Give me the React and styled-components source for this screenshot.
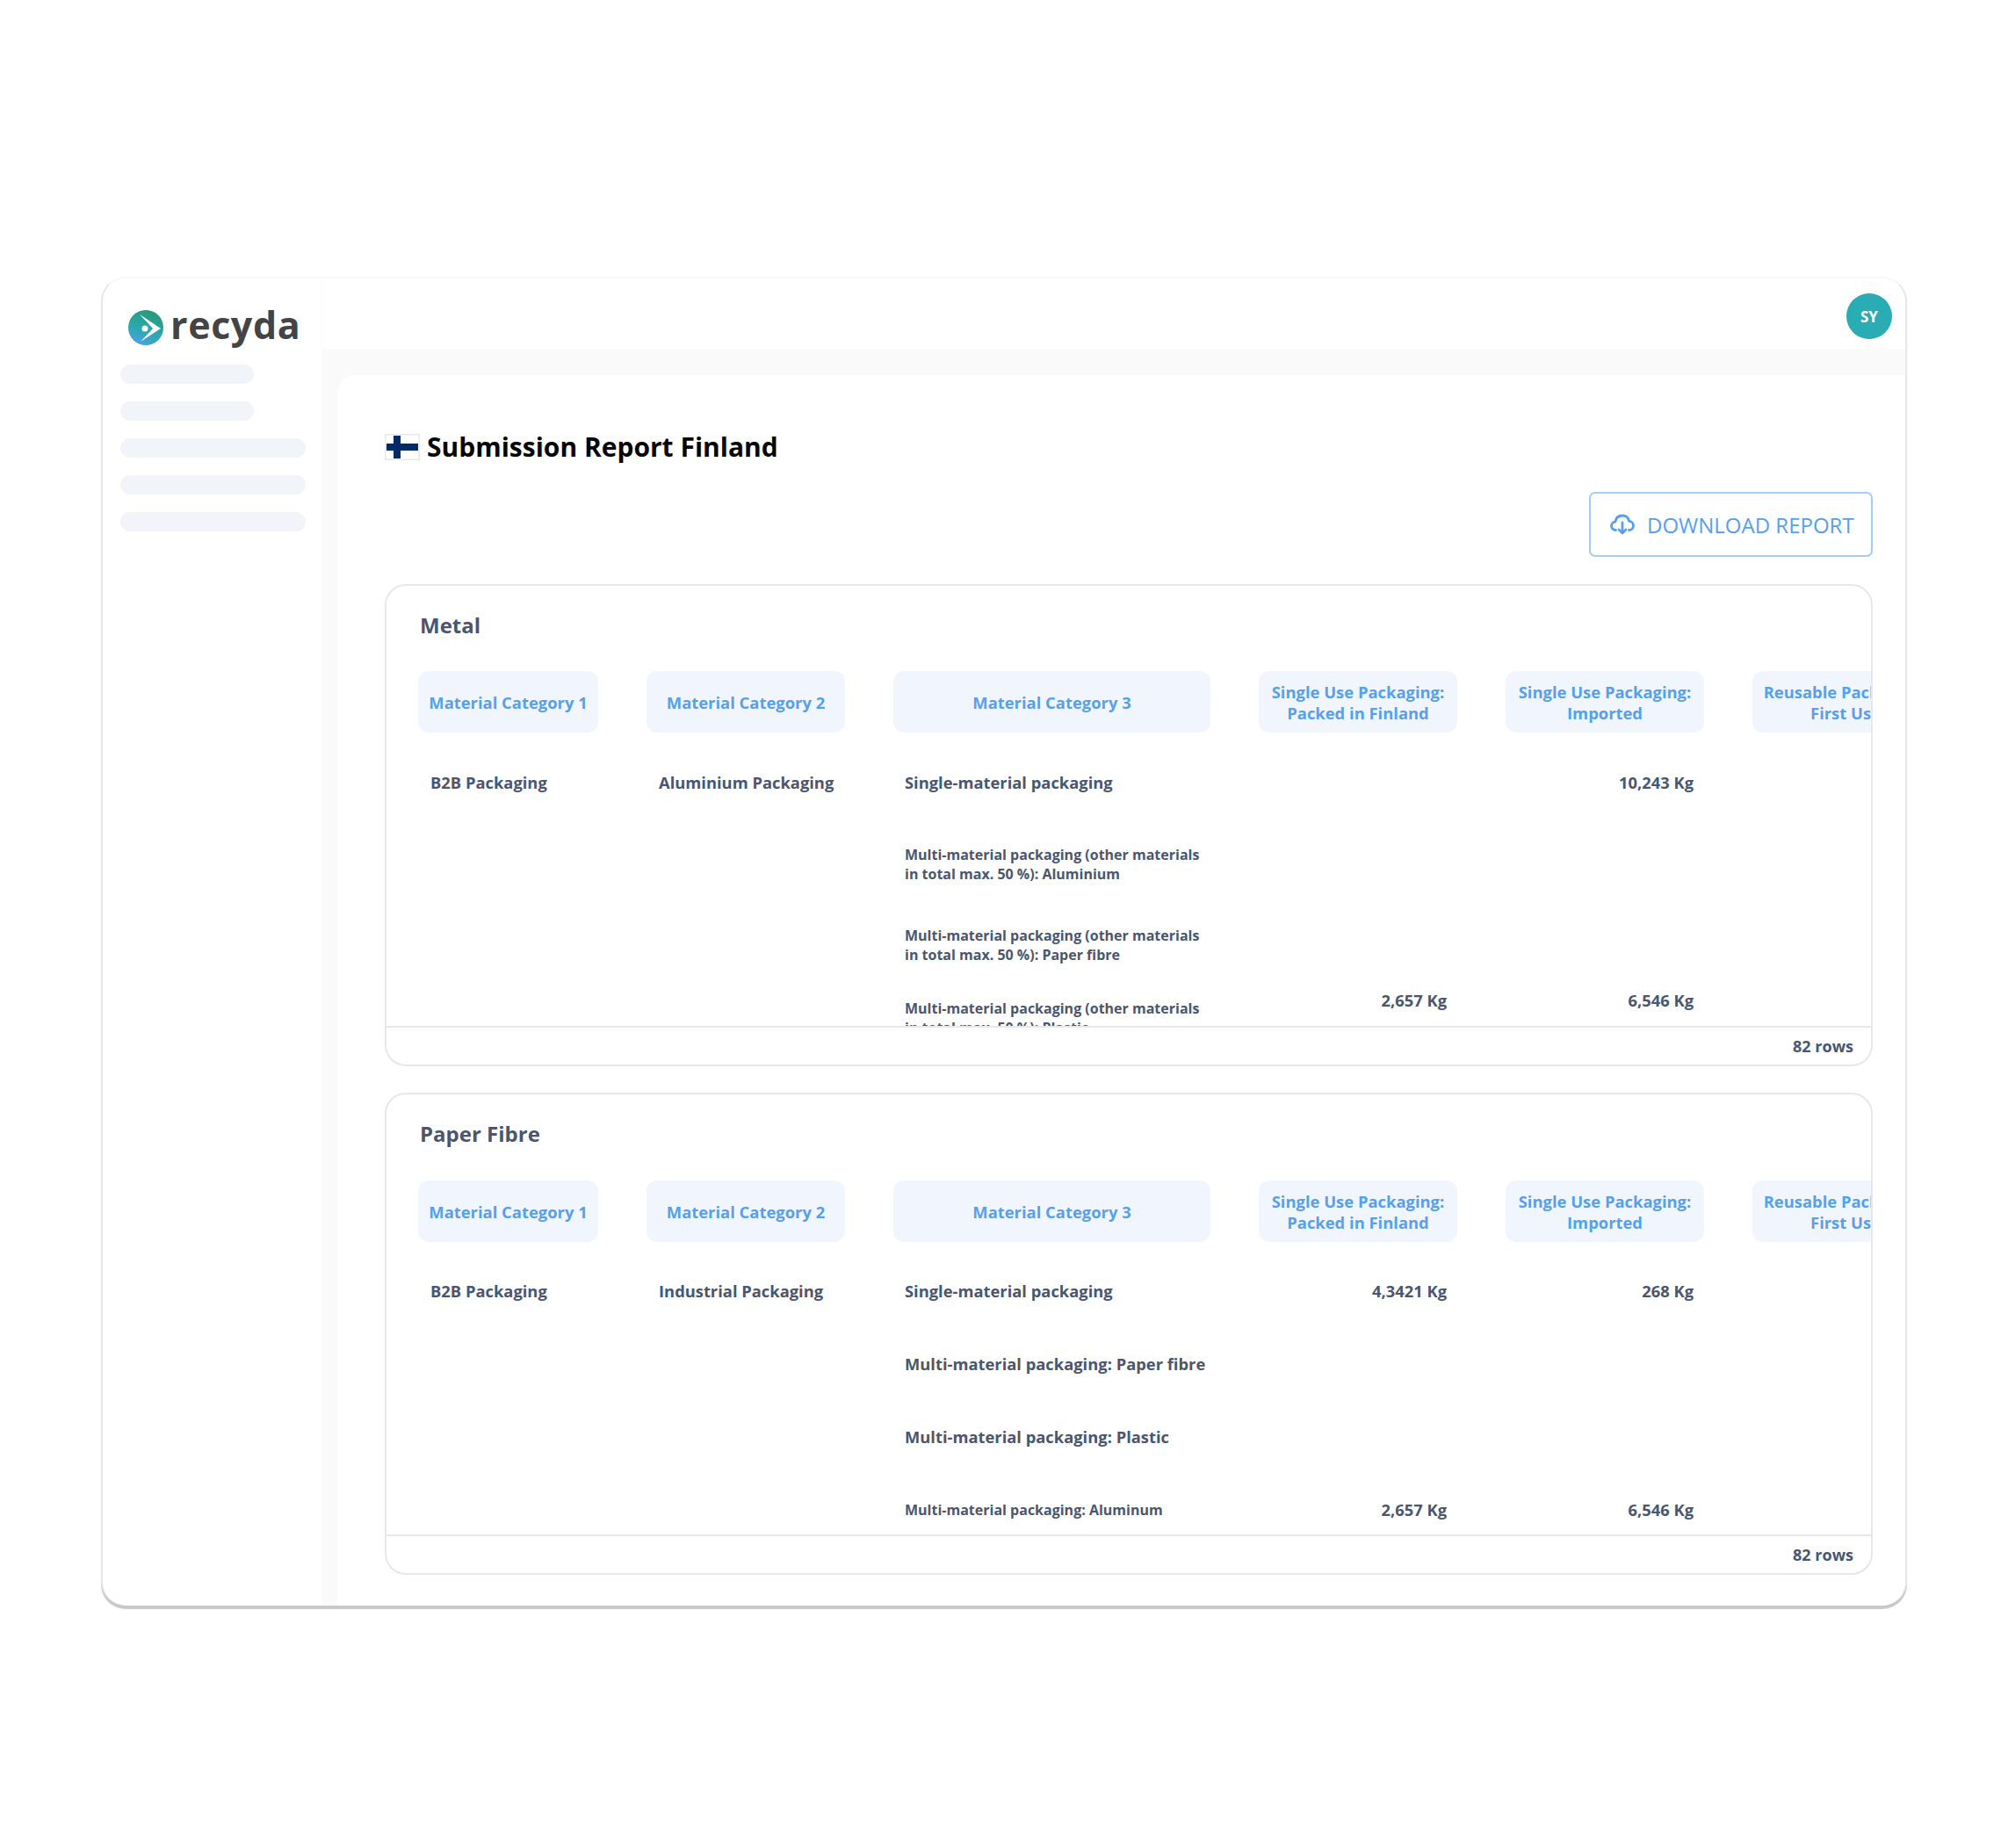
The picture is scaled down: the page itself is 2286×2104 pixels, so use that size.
import React from "react";
import styled, { createGlobalStyle } from "styled-components";

const GlobalStyle = createGlobalStyle`
  html, body {
    margin: 0;
    padding: 0;
    background: #fff;
    font-family: "Open Sans", "Liberation Sans", sans-serif;
  }
  * { box-sizing: border-box; }
`;

const Page = styled.div`
  width: 2286px;
  height: 2104px;
  padding: 315px 0 0 115px;
  overflow: hidden;
`;

const Window = styled.div`
  width: 2056px;
  height: 1513px;
  display: grid;
  grid-template-columns: 250px 1fr;
  background: #fff;
  border: 2px solid #e8e8e8;
  border-top-color: #f8f8f8;
  border-bottom: none;
  border-radius: 28px;
  box-shadow: 0 4px 1px #c8c8c8;
  overflow: hidden;
`;

const Sidebar = styled.aside`
  display: flex;
  flex-direction: column;
  padding: 35px 0 0 20px;
  border-right: 1px solid #fafafa;
`;

const Logo = styled.div`
  display: flex;
  align-items: center;
  gap: 8px;
  height: 42px;
  margin: 0 0 21px 9px;
`;

const LogoWord = styled.span`
  font-size: 43px;
  font-weight: 700;
  line-height: 42px;
  letter-spacing: 0.6px;
  color: #444;
  margin-bottom: 6px;
`;

const Skeleton = styled.div`
  width: ${(p) => (p.$short ? "152px" : "211px")};
  height: 22px;
  margin-bottom: 20px;
  border-radius: 11px;
  background: #f1f4f9;
`;

const Main = styled.div`
  display: flex;
  flex-direction: column;
  min-width: 0;
`;

const TopBar = styled.header`
  height: 80px;
  display: flex;
  align-items: flex-start;
  justify-content: flex-end;
  padding: 17px 15px 0 0;
`;

const Avatar = styled.div`
  width: 52px;
  height: 52px;
  border-radius: 50%;
  background: #2aacb4;
  color: #fff;
  display: flex;
  align-items: center;
  justify-content: center;
  font-size: 17px;
  font-weight: 700;
`;

const Content = styled.div`
  flex: 1;
  background: #fafafa;
  padding: 30px 0 0 17px;
  min-height: 0;
`;

const Sheet = styled.main`
  height: 100%;
  background: #fff;
  border-radius: 20px 0 0 0;
  padding: 67px 37px 0 54px;
`;

const TitleRow = styled.div`
  display: flex;
  align-items: center;
  gap: 8px;
  height: 30px;
  margin-bottom: 36px;
`;

const Title = styled.h1`
  margin: 0;
  font-size: 30px;
  font-weight: 700;
  line-height: 30px;
  color: #060606;
`;

const Actions = styled.div`
  display: flex;
  justify-content: flex-end;
  margin-bottom: 31px;
`;

const DownloadButton = styled.button`
  width: 323px;
  height: 74px;
  display: flex;
  align-items: center;
  gap: 14px;
  padding: 0 0 0 22px;
  background: #fff;
  border: 2px solid #a5cdf8;
  border-radius: 7px;
  color: #57a0ee;
  font-family: inherit;
  font-size: 24px;
  font-weight: 400;
`;

const Card = styled.section`
  border: 2px solid #e8e8e8;
  border-radius: 24px;
  margin-bottom: 30px;
  height: 549px;
  display: flex;
  flex-direction: column;
  overflow: hidden;
`;

const CardTitle = styled.h2`
  margin: 0;
  height: ${(p) => p.$height}px;
  padding: 27px 0 0 38px;
  font-size: 24px;
  font-weight: 700;
  line-height: 36px;
  color: #4a5670;
`;

const Scroller = styled.div`
  flex: 1;
  min-height: 0;
  overflow: hidden;
  padding-left: 36px;
`;

const Columns = "205px 226px 361px 226px 226px 212px";

const HeaderRow = styled.div`
  display: grid;
  grid-template-columns: ${Columns};
  column-gap: 55px;
  width: max-content;
  margin-bottom: ${(p) => p.$gap}px;
`;

const HeaderCell = styled.div`
  height: 70px;
  padding-top: 2px;
  display: flex;
  align-items: center;
  justify-content: center;
  text-align: center;
  background: #f1f6fe;
  border-radius: 12px;
  color: #57a0ee;
  font-size: 18.4px;
  font-weight: 700;
  line-height: 24px;
  white-space: pre-line;
`;

const Row = styled.div`
  display: grid;
  grid-template-columns: ${Columns};
  column-gap: 55px;
  width: max-content;
  height: ${(p) => p.$height}px;
`;

const Cell = styled.div`
  display: flex;
  align-items: center;
  padding-left: 14px;
  color: #4a5670;
  font-size: 18.35px;
  font-weight: 700;
  line-height: 24px;
`;

const VariantCell = styled(Cell)`
  padding-left: 13px;
  padding-bottom: ${(p) => (p.$lift ? "2px" : "0")};
  font-size: ${(p) => (p.$small ? "16px" : "18.35px")};
  line-height: ${(p) => (p.$small ? "22px" : "24px")};
  white-space: pre-line;
`;

const AmountCell = styled(Cell)`
  align-items: ${(p) => (p.$top ? "flex-start" : "center")};
  justify-content: flex-end;
  padding: ${(p) => (p.$top ? "10px" : "0")} 12px 0 0;
`;

const Footer = styled.div`
  height: 44px;
  flex: none;
  border-top: 2px solid #e8e8e8;
  padding-right: 20px;
  display: flex;
  align-items: center;
  justify-content: flex-end;
  color: #4a5670;
  font-size: 18px;
  font-weight: 700;
`;

const LogoMark = () => (
  <svg width="40" height="40" viewBox="0 0 40 40">
    <defs>
      <linearGradient id="logoFill" x1="0.7" y1="0" x2="0.3" y2="1">
        <stop offset="0" stopColor="#2b9577" />
        <stop offset="0.55" stopColor="#29a9a8" />
        <stop offset="1" stopColor="#48a2ea" />
      </linearGradient>
    </defs>
    <circle cx="20" cy="20" r="20" fill="url(#logoFill)" />
    <path d="M13 5 L37 21 L14 36 L28 21 Z" fill="#fff" />
    <circle cx="19" cy="21" r="3.5" fill="#fff" />
  </svg>
);

const FinnishFlag = () => (
  <svg width="40" height="30" viewBox="0 0 40 30">
    <rect x="0.75" y="0.75" width="38.5" height="28.5" fill="#fff" stroke="#e8e8e8" strokeWidth="1.5" />
    <rect x="10" y="2" width="8" height="26" fill="#012a67" />
    <rect x="2" y="11" width="36" height="8" fill="#012a67" />
  </svg>
);

const CloudDownload = () => (
  <svg width="28" height="24" viewBox="0 0 28 24" fill="none" stroke="#57a0ee" strokeWidth="2.8" strokeLinecap="round" strokeLinejoin="round">
    <path d="M6.5 18.5 C3.5 18.5 1.5 16.4 1.5 13.8 C1.5 11.3 3.4 9.4 5.8 9.2 C6.6 4.8 9.8 2 14 2 C18 2 20.9 4.6 21.6 8.4 C24.4 8.5 26.5 10.6 26.5 13.4 C26.5 16.3 24.4 18.5 21.5 18.5" />
    <path d="M14 10 V21.5" />
    <path d="M10 18 L14 22 L18 18" />
  </svg>
);

const headers = [
  "Material Category 1",
  "Material Category 2",
  "Material Category 3",
  "Single Use Packaging:\nPacked in Finland",
  "Single Use Packaging:\nImported",
  "Reusable Packaging:\nFirst Use",
];

const metalRows = [
  { height: 83, cat1: "B2B Packaging", cat2: "Aluminium Packaging", cat3: "Single-material packaging", imported: "10,243 Kg" },
  { height: 103, cat3: "Multi-material packaging (other materials\nin total max. 50 %): Aluminium", small: true },
  { height: 82, cat3: "Multi-material packaging (other materials\nin total max. 50 %): Paper fibre", small: true },
  { height: 85, cat3: "Multi-material packaging (other materials\nin total max. 50 %): Plastic", small: true, lift: true, packed: "2,657 Kg", imported: "6,546 Kg", top: true },
];

const paperRows = [
  { height: 83, cat1: "B2B Packaging", cat2: "Industrial Packaging", cat3: "Single-material packaging", packed: "4,3421 Kg", imported: "268 Kg" },
  { height: 83, cat3: "Multi-material packaging: Paper fibre" },
  { height: 83, cat3: "Multi-material packaging: Plastic" },
  { height: 83, cat3: "Multi-material packaging: Aluminum", small: true, packed: "2,657 Kg", imported: "6,546 Kg" },
];

const ReportCard = ({ title, rows, titleHeight, headerGap }) => (
  <Card>
    <CardTitle $height={titleHeight}>{title}</CardTitle>
    <Scroller>
      <HeaderRow $gap={headerGap}>
        {headers.map((h) => (
          <HeaderCell key={h}>{h}</HeaderCell>
        ))}
      </HeaderRow>
      {rows.map((r) => (
        <Row key={r.cat3} $height={r.height}>
          <Cell>{r.cat1}</Cell>
          <Cell>{r.cat2}</Cell>
          <VariantCell $small={r.small} $lift={r.lift}>{r.cat3}</VariantCell>
          <AmountCell $top={r.top}>{r.packed}</AmountCell>
          <AmountCell $top={r.top}>{r.imported}</AmountCell>
          <AmountCell />
        </Row>
      ))}
    </Scroller>
    <Footer>82 rows</Footer>
  </Card>
);

export default function App() {
  return (
    <Page>
      <GlobalStyle />
      <Window>
        <Sidebar>
          <Logo>
            <LogoMark />
            <LogoWord>recyda</LogoWord>
          </Logo>
          <Skeleton $short />
          <Skeleton $short />
          <Skeleton />
          <Skeleton />
          <Skeleton />
        </Sidebar>
        <Main>
          <TopBar>
            <Avatar>SY</Avatar>
          </TopBar>
          <Content>
            <Sheet>
              <TitleRow>
                <FinnishFlag />
                <Title>Submission Report Finland</Title>
              </TitleRow>
              <Actions>
                <DownloadButton>
                  <CloudDownload />
                  DOWNLOAD REPORT
                </DownloadButton>
              </Actions>
              <ReportCard title="Metal" rows={metalRows} titleHeight={97} headerGap={15} />
              <ReportCard title="Paper Fibre" rows={paperRows} titleHeight={98} headerGap={14} />
            </Sheet>
          </Content>
        </Main>
      </Window>
    </Page>
  );
}
